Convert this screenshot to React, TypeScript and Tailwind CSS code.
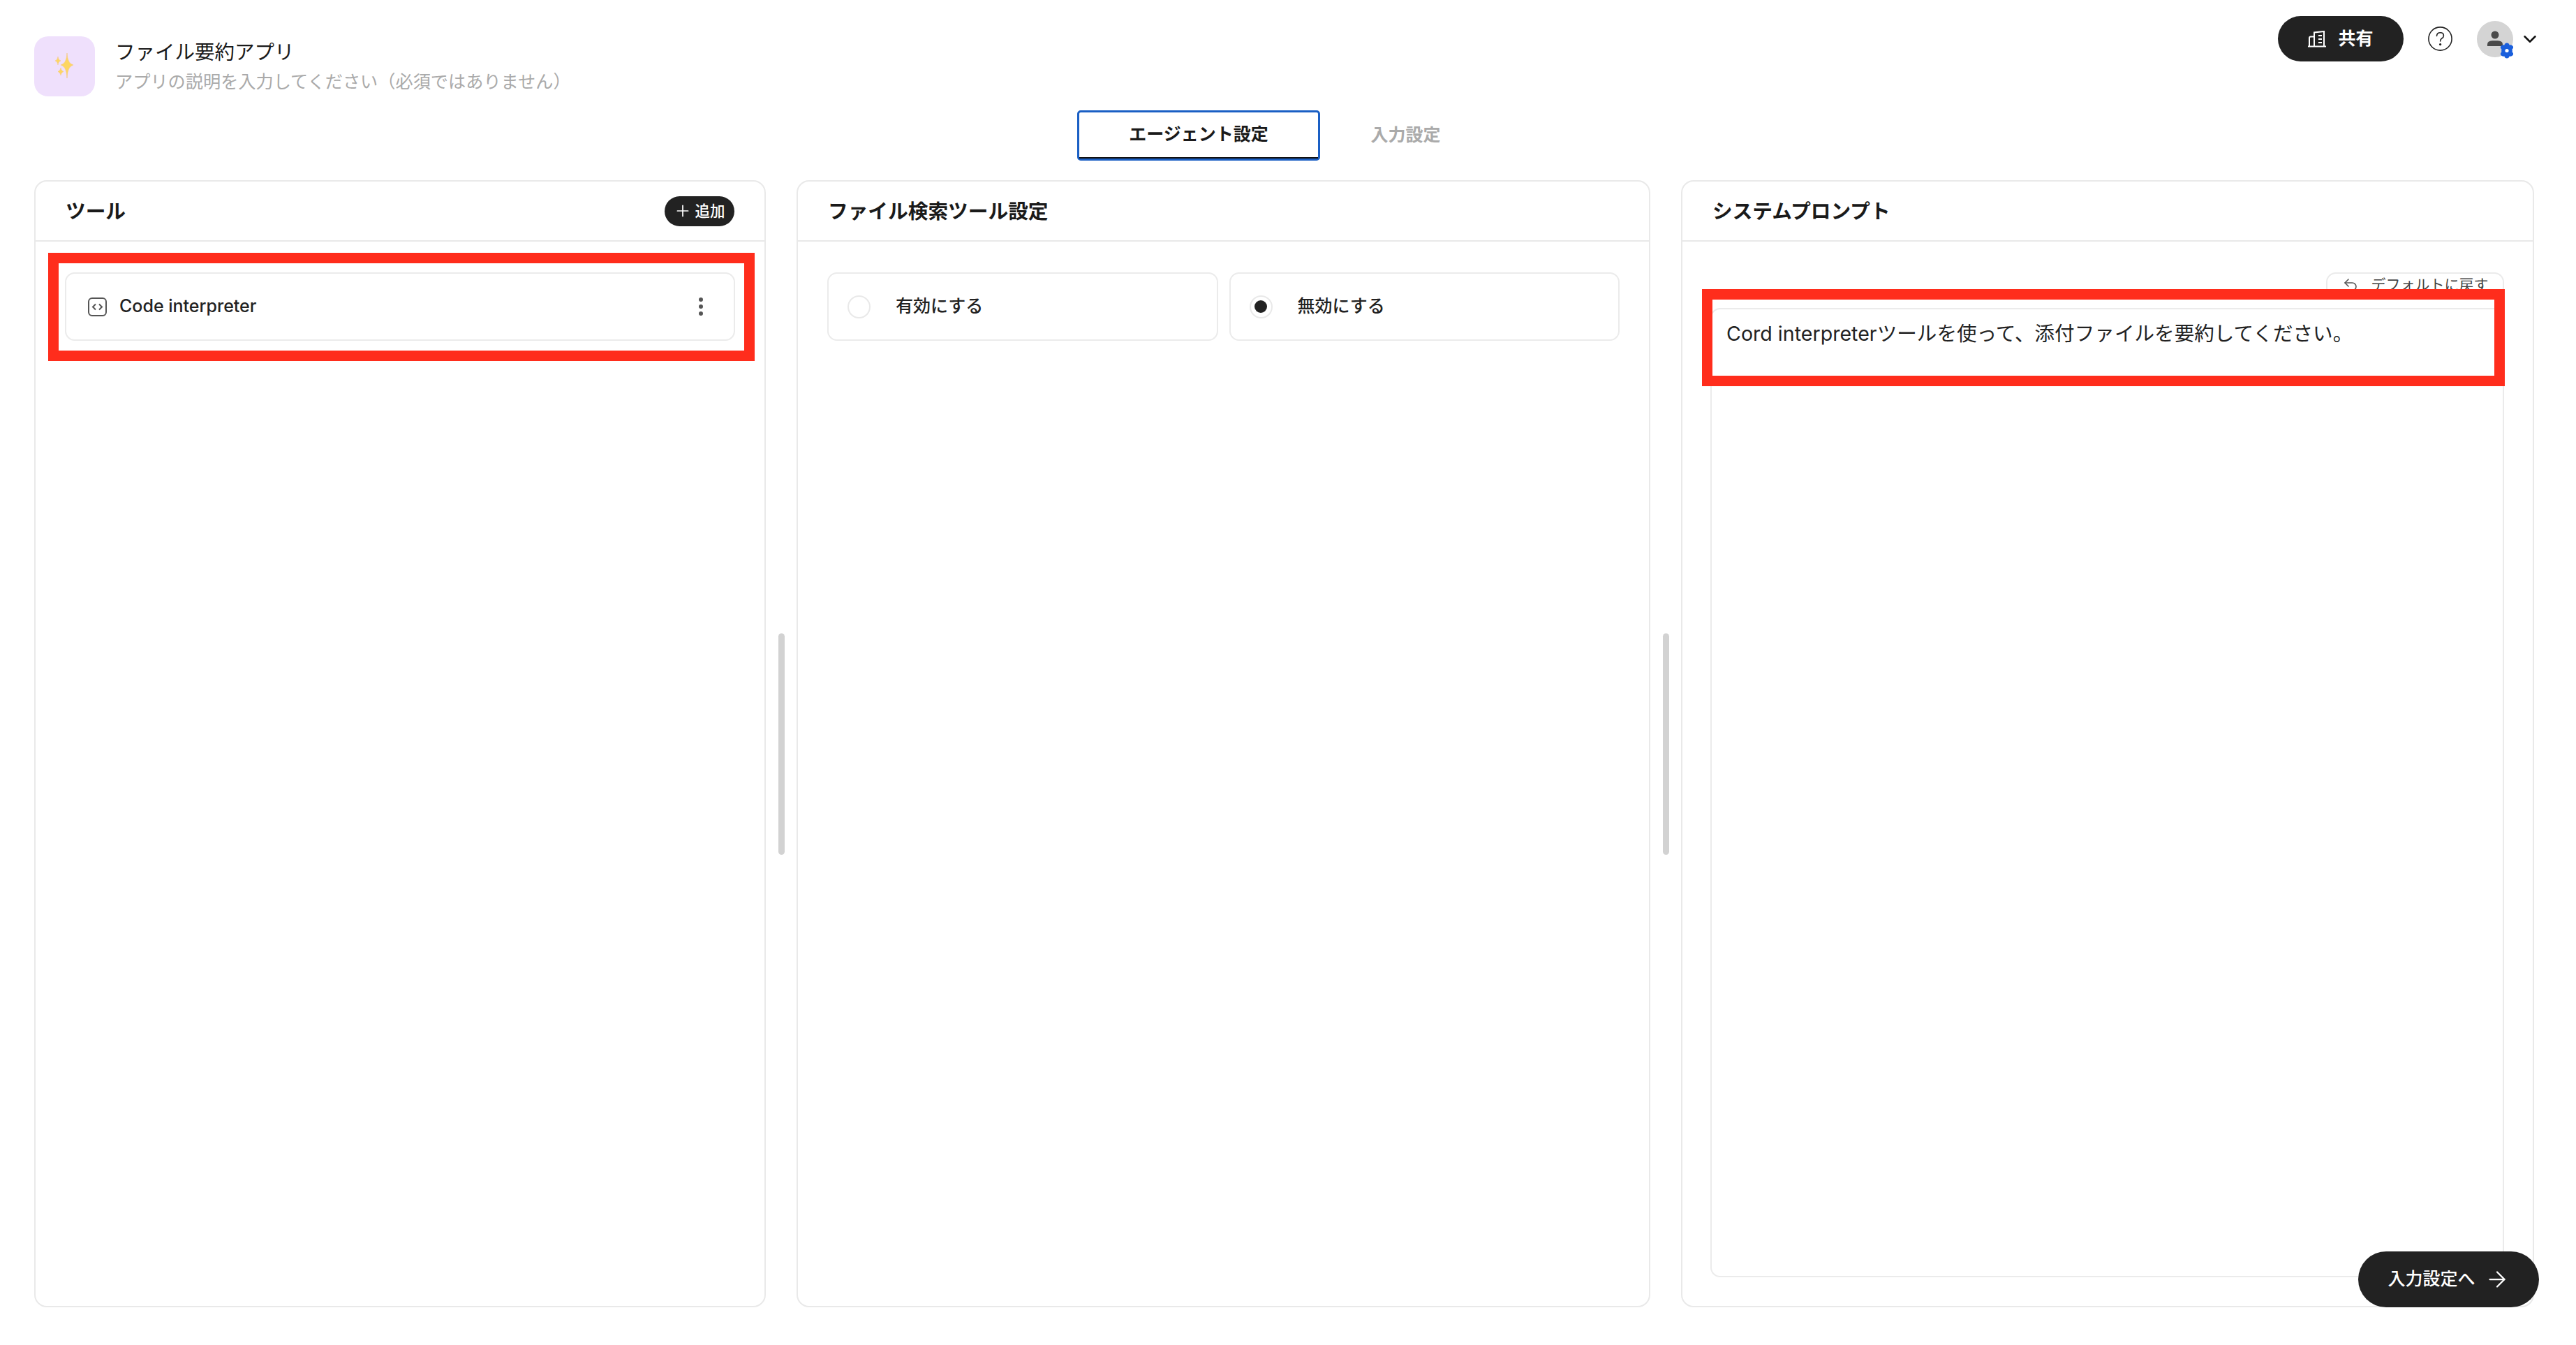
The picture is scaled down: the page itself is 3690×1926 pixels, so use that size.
import React from "react";
import { ArrowRight, ChevronDown, Plus, Undo2 } from "lucide-react";

const font = "font-['Inter','Noto_Sans_CJK_JP',sans-serif]";

// Sparkles emoji in the app badge
const Sparkles = () => (
  <svg width="87" height="86" viewBox="0 0 87 86">
    <path d="M47 24 Q47.5 39 56 41 Q47.5 43 47 60 Q46.5 43 38 41 Q46.5 39 47 24Z" fill="#fdd663" stroke="#f5c26b" strokeWidth="0.5" />
    <path d="M34 29 Q34.4 34 38 35 Q34.4 36 34 41 Q33.6 36 30 35 Q33.6 34 34 29Z" fill="#fdd663" stroke="#f5c26b" strokeWidth="0.4" />
    <path d="M38 45 Q38.4 49 42 50.5 Q38.4 52 38 56 Q37.6 52 34 50.5 Q37.6 49 38 45Z" fill="#fdd663" stroke="#f5c26b" strokeWidth="0.4" />
  </svg>
);

const BuildingIcon = () => (
  <svg width="26" height="24" viewBox="0 0 26 24" fill="none" stroke="#fff" strokeWidth="2">
    <path d="M0 22.5H26" />
    <path d="M9 22V2.5L23 1V22" />
    <path d="M9 8.5H4Q2 8.5 2 10.5V22" />
    <path d="M15 7H20M15 12H20M15 17H20" />
  </svg>
);

const HelpIcon = () => (
  <svg width="35" height="35" viewBox="0 0 35 35" fill="none" stroke="#222" strokeWidth="1.6">
    <circle cx="17.5" cy="17.5" r="16.6" />
    <path d="M12.5 13.5Q12.8 8.8 17.6 8.8Q22.4 8.8 22.4 13Q22.4 15.6 19.8 17Q17.6 18.2 17.6 21" strokeLinecap="round" />
    <circle cx="17.6" cy="25.6" r="0.9" fill="#222" />
  </svg>
);

const Avatar = () => (
  <div className="relative h-[52px] w-[52px] rounded-full bg-[#d4d4d4] flex items-center justify-center">
    <svg width="24" height="24" viewBox="0 0 24 24" fill="#4a4a4a">
      <circle cx="12" cy="6" r="5.5" />
      <path d="M1 22V19.5Q1 14.5 8 14.2H16Q23 14.5 23 19.5V22Z" />
    </svg>
    <svg className="absolute left-[32px] top-[31px]" width="22" height="23" viewBox="0 0 22 23">
      <path
        d="M11 0.5Q14 0.5 14.6 3.4Q17.6 2.6 19.6 5Q21 7.6 18.6 9.4Q19 11.5 18.6 13.6Q21 15.4 19.6 18Q17.6 20.4 14.6 19.6Q14 22.5 11 22.5Q8 22.5 7.4 19.6Q4.4 20.4 2.4 18Q1 15.4 3.4 13.6Q3 11.5 3.4 9.4Q1 7.6 2.4 5Q4.4 2.6 7.4 3.4Q8 0.5 11 0.5Z"
        fill="#1a5fdc"
      />
      <circle cx="11" cy="11.5" r="2.6" fill="#fff" />
    </svg>
  </div>
);

const CodeIcon = () => (
  <svg width="27" height="27" viewBox="0 0 27 27" fill="none" stroke="#555" strokeWidth="2">
    <rect x="1" y="1" width="25" height="25" rx="5" />
    <path d="M11 9.5L7 13.5L11 17.5M16 9.5L20 13.5L16 17.5" />
  </svg>
);

const PanelHeader = ({ title, children }: { title: string; children?: React.ReactNode }) => (
  <div className="h-[86px] shrink-0 flex items-center justify-between border-b-2 border-[#e9e9e9] pl-[43px] pr-[43px]">
    <h2 className="text-[28.7px] leading-[44px] pt-[1px] font-bold text-[#1a1a1a]">{title}</h2>
    {children}
  </div>
);

const RadioCard = ({ label, checked }: { label: string; checked?: boolean }) => (
  <div className="flex-1 h-[98px] border-2 border-[#ebebeb] rounded-[14px] flex items-center pl-[27px] gap-[36px]">
    <div className="h-[33px] w-[33px] rounded-full border-2 border-[#e9e9e9] flex items-center justify-center">
      {checked && <div className="h-[18px] w-[18px] rounded-full bg-[#222]" />}
    </div>
    <span className="text-[25px] font-medium text-[#222]">{label}</span>
  </div>
);

const Splitter = () => (
  <div className="w-[44px] shrink-0 flex items-center justify-center">
    <div className="h-[317px] w-[9px] rounded-full bg-[#d2d2d2]" />
  </div>
);

export default function App() {
  return (
    <div className={`${font} relative h-[1926px] w-[3690px] bg-white flex flex-col pl-[49px] pr-[60px] pt-[23px] pb-[54px] overflow-hidden`}>
      {/* Top bar */}
      <header className="h-[115px] shrink-0 flex items-start justify-between">
        <div className="mt-[29px] flex items-center gap-[29px]">
          <div className="h-[86px] w-[87px] rounded-[20px] bg-[#efe0fc]">
            <Sparkles />
          </div>
          <div className="flex flex-col gap-[8px]">
            <div className="text-[28.5px] leading-[36px] text-[#1a1a1a]">ファイル要約アプリ</div>
            <div className="text-[25.2px] leading-[32px] text-[#aaaaaa]">アプリの説明を入力してください（必須ではありません）</div>
          </div>
        </div>
        <div className="flex items-center mr-[-9px]">
          <button className="h-[65px] w-[180px] rounded-full bg-[#222] text-white flex items-center justify-center gap-[17px] text-[25px] font-bold">
            <BuildingIcon />
            共有
          </button>
          <div className="ml-[35px] mr-[35px]">
            <HelpIcon />
          </div>
          <Avatar />
          <ChevronDown className="ml-[9px]" size={30} color="#111" strokeWidth={2} />
        </div>
      </header>

      {/* Tabs */}
      <nav className="mt-[20px] h-[72px] shrink-0 flex justify-center">
        <div className="w-[348px] border-[3px] border-[#1a5fc4] rounded-[5px]">
          <div className="h-full border-b-2 border-[#111] flex items-center justify-center text-[25px] font-bold text-[#1a1a1a]">
            エージェント設定
          </div>
        </div>
        <div className="w-[245px] flex items-center justify-center text-[25px] font-bold text-[#aaaaaa]">入力設定</div>
      </nav>

      {/* Panels */}
      <main className="mt-[28px] flex-1 flex min-h-0">
        <section className="w-[1048px] shrink-0 border-2 border-[#e9e9e9] rounded-[18px] flex flex-col">
          <PanelHeader title="ツール">
            <button className="h-[43px] w-[100px] rounded-full bg-[#222] text-white flex items-center justify-center gap-[4px] text-[21.5px] font-medium">
              <Plus size={26} strokeWidth={1.6} />
              追加
            </button>
          </PanelHeader>
          <div className="pt-[44px] pl-[42px] pr-[42px]">
            <div className="h-[98px] border-2 border-[#ebebeb] rounded-[14px] flex items-center justify-between pl-[31px] pr-[44px]">
              <div className="flex items-center gap-[18px]">
                <CodeIcon />
                <span className="text-[25px] font-medium text-[#222]">Code interpreter</span>
              </div>
              <div className="flex flex-col gap-[4px]">
                <div className="h-[6px] w-[6px] rounded-full bg-[#555]" />
                <div className="h-[6px] w-[6px] rounded-full bg-[#555]" />
                <div className="h-[6px] w-[6px] rounded-full bg-[#555]" />
              </div>
            </div>
          </div>
        </section>

        <Splitter />

        <section className="w-[1223px] shrink-0 border-2 border-[#e9e9e9] rounded-[18px] flex flex-col">
          <PanelHeader title="ファイル検索ツール設定" />
          <div className="pt-[44px] pl-[42px] pr-[42px] flex gap-[16px]">
            <RadioCard label="有効にする" />
            <RadioCard label="無効にする" checked />
          </div>
        </section>

        <Splitter />

        <section className="flex-1 border-2 border-[#e9e9e9] rounded-[18px] flex flex-col">
          <PanelHeader title="システムプロンプト" />
          <div className="flex-1 min-h-0 flex flex-col pl-[40px] pr-[41px] pb-[41px]">
            <div className="mt-[44px] flex justify-end">
              <button className="h-[36px] w-[255px] border-2 border-[#ebebeb] rounded-[14px] flex items-center justify-center gap-[18px] text-[21px] text-[#444]">
                <Undo2 size={24} strokeWidth={1.6} color="#555" />
                デフォルトに戻す
              </button>
            </div>
            <div className="mt-[15px] flex-1 border-2 border-[#ebebeb] rounded-[14px] px-[21px] pt-[17px] text-[28.6px] leading-[36px] text-[#222]">
              Cord interpreterツールを使って、添付ファイルを要約してください。
            </div>
          </div>
        </section>
      </main>

      {/* Floating next button */}
      <button className="absolute left-[3378px] top-[1792px] h-[80px] w-[259px] rounded-full bg-[#222] text-white flex items-center justify-center gap-[13px] text-[25px] font-medium">
        入力設定へ
        <ArrowRight size={36} strokeWidth={1.5} />
      </button>

      {/* Red annotation boxes */}
      <div className="absolute left-[69px] top-[362px] h-[155px] w-[1012px] border-[15px] border-[#ff2d1c]" />
      <div className="absolute left-[2438px] top-[414px] h-[139px] w-[1150px] border-[15px] border-[#ff2d1c]" />
    </div>
  );
}
